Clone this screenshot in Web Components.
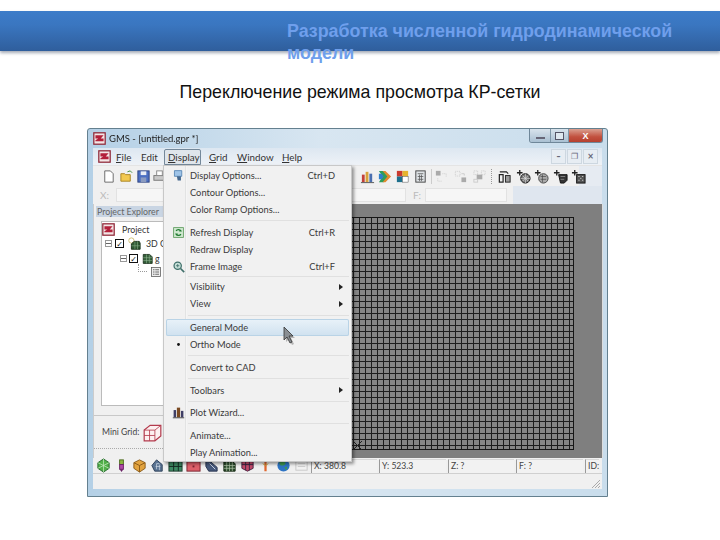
<!DOCTYPE html>
<html lang="ru">
<head>
<meta charset="utf-8">
<title>GMS</title>
<style>
  html, body { margin: 0; background: #fff; }
  body { width: 720px; height: 540px; overflow: hidden; font-family: 'Liberation Sans', sans-serif; }
</style>
</head>
<body>
<slide-header>Разработка численной гидродинамической модели</slide-header>
<slide-caption>Переключение режима просмотра КР-сетки</slide-caption>

<gms-window>
  <gms-titlebar slot="title">GMS - [untitled.gpr *]</gms-titlebar>
  <gms-menubar slot="menubar"></gms-menubar>
  <gms-toolbar slot="toolbar"></gms-toolbar>
  <gms-inputbar slot="inputbar"></gms-inputbar>
  <project-panel slot="side"></project-panel>
  <grid-view slot="view"></grid-view>
  <gms-statusbar slot="status"></gms-statusbar>
  <gms-dropdown slot="overlay">
    <menu-item icon="options" shortcut="Ctrl+D">Display Options...</menu-item>
    <menu-item>Contour Options...</menu-item>
    <menu-item>Color Ramp Options...</menu-item>
    <menu-sep></menu-sep>
    <menu-item icon="refresh" shortcut="Ctrl+R">Refresh Display</menu-item>
    <menu-item>Redraw Display</menu-item>
    <menu-item icon="frame" shortcut="Ctrl+F">Frame Image</menu-item>
    <menu-sep style="height:3.5px"></menu-sep>
    <menu-item arrow>Visibility</menu-item>
    <menu-item arrow>View</menu-item>
    <menu-sep style="height:6.5px"></menu-sep>
    <menu-item active>General Mode</menu-item>
    <menu-item icon="dot">Ortho Mode</menu-item>
    <menu-sep style="height:6px"></menu-sep>
    <menu-item>Convert to CAD</menu-item>
    <menu-sep style="height:6px"></menu-sep>
    <menu-item arrow>Toolbars</menu-item>
    <menu-sep></menu-sep>
    <menu-item icon="chart">Plot Wizard...</menu-item>
    <menu-sep></menu-sep>
    <menu-item>Animate...</menu-item>
    <menu-item>Play Animation...</menu-item>
  </gms-dropdown>
</gms-window>

<script>
// small toolbar and tree pictures, all drawn on a 16x16 box
const ICONS = {
  logo: '<rect x="1" y="1" width="14" height="14" fill="#f3e6e6" stroke="#8c2233" stroke-width="1.5"/><path d="M3 4h10L9.5 8H13v3.500H3V10l3.500-2H3z" fill="#b3203a"/>',
  new: '<path d="M4 2h6l3 3v9H4z" fill="#fff" stroke="#666"/>',
  open: '<path d="M2 13V5h4l1 1h5v7z" fill="#f2c94f" stroke="#a98322"/><path d="M9 3l3-1 2 2" fill="none" stroke="#3d8b3d"/>',
  save: '<rect x="2" y="2" width="12" height="12" fill="#4c6fc2" stroke="#2c417f"/><rect x="5" y="2.500" width="6" height="4" fill="#e8edf6"/><rect x="5" y="9" width="6" height="5" fill="#8b9bc0"/>',
  print: '<rect x="2" y="7" width="12" height="5" fill="#c9c9c9" stroke="#777"/><rect x="5" y="2" width="6" height="5" fill="#fff" stroke="#888"/>',
  bars: '<rect x="2" y="6" width="3" height="8" fill="#c2413a"/><rect x="6" y="3" width="3" height="11" fill="#d8a23a"/><rect x="10" y="5" width="3" height="9" fill="#4a6fb0"/><path d="M1 14.500h14" stroke="#555"/>',
  ramp: '<path d="M2 2h5l7 6-7 6H2l4-6z" fill="#2e9d5b"/><path d="M6 2h3l6 6-6 6H6l5-6z" fill="#e08a2e"/><path d="M2 5h3l2 3-2 3H2z" fill="#2f7fc9"/>',
  colors: '<rect x="2" y="2" width="6" height="6" fill="#c93a2e"/><rect x="8" y="2" width="6" height="6" fill="#e6b32e"/><rect x="2" y="8" width="6" height="6" fill="#1d6f8c"/><rect x="8" y="8" width="6" height="6" fill="#fff" stroke="#444" stroke-width=".5"/>',
  calc: '<rect x="3" y="2" width="10" height="12" fill="#dfe3e6" stroke="#444"/><path d="M5 5h6M5 8h6M5 11h6M7 6v7M9 6v7" stroke="#555" stroke-width=".8"/>',
  faint1: '<rect x="2" y="2" width="5" height="5" fill="#aaa"/><path d="M9 5h4v3M4 10v3h5" fill="none" stroke="#ccc" stroke-dasharray="1 1"/>',
  faint2: '<rect x="2.500" y="2.500" width="5" height="5" fill="none" stroke="#ccc" stroke-dasharray="1 1"/><rect x="9" y="9" width="5" height="5" fill="#aaa"/><path d="M9 5h3v2" fill="none" stroke="#ccc"/>',
  faint3: '<rect x="2" y="2" width="4" height="4" fill="none" stroke="#ccc" stroke-dasharray="1 1"/><rect x="10" y="2" width="4" height="4" fill="none" stroke="#ccc" stroke-dasharray="1 1"/><rect x="5" y="6" width="6" height="5" fill="#aaa"/><rect x="2" y="11" width="4" height="3" fill="none" stroke="#ccc"/>',
  solid: '<rect x="2.500" y="6" width="4" height="8" fill="none" stroke="#222" stroke-width="1.300"/><rect x="9" y="7" width="5" height="7" fill="#999" stroke="#222"/><path d="M3 3h7l2 2" fill="none" stroke="#222" stroke-width="1.200"/>',
  tool1: '<circle cx="10" cy="10" r="5" fill="#777" stroke="#111"/><path d="M7 7l6 6M13 7l-6 6M10 5v10M5 10h10" stroke="#ddd" stroke-width=".7"/><path d="M4 1v6M1 4h6" stroke="#222" stroke-width="1.400"/>',
  tool2: '<circle cx="10" cy="10" r="5" fill="#aaa" stroke="#444"/><path d="M7 8h6M7 11h6M9 6v8" stroke="#444" stroke-width=".7"/><path d="M4 1v6M1 4h6" stroke="#222" stroke-width="1.400"/>',
  tool3: '<path d="M6 6h9v6l-3 3H8z" fill="#333" stroke="#111"/><path d="M8 8h5M8 11h4" stroke="#aaa" stroke-width=".7"/><path d="M4 1v6M1 4h6" stroke="#222" stroke-width="1.400"/>',
  tool4: '<rect x="6" y="6" width="9" height="9" fill="#555" stroke="#111"/><path d="M8 8h1M12 8h1M8 12h1M12 12h1M10 10h1" stroke="#eee"/><path d="M4 1v6M1 4h6" stroke="#222" stroke-width="1.400"/>',
  cone: '<path d="M8 1l6 4v6l-6 4-6-4V5z" fill="#52b04a" stroke="#23662a"/><path d="M8 1v14M2 5l12 6M14 5L2 11" stroke="#c3e8bd" stroke-width=".8"/>',
  marker: '<rect x="6" y="2" width="4" height="5" fill="#8bb93f" stroke="#4d6b20"/><rect x="6" y="7" width="4" height="5" fill="#b14aa8" stroke="#6b2166"/><path d="M6 12l2 3 2-3z" fill="#6b2166"/>',
  box: '<path d="M8 2l6 3v6l-6 4-6-4V5z" fill="#e2a33f" stroke="#8a5a16"/><path d="M2 5l6 3 6-3M8 8v7" fill="none" stroke="#8a5a16"/>',
  house: '<path d="M7 2l6 5v7H5L2 8z" fill="#5a7392" stroke="#2c3e57"/><path d="M7 6h3M6 9h5M7 6v6M10 7v6" stroke="#c8d4e2" stroke-width=".8"/>',
  tgrid: '<rect x="1" y="4" width="14" height="10" fill="#3d8a63" stroke="#1f3f30"/><path d="M1 9h14M6 4v10M11 4v10" stroke="#12281f"/>',
  tred: '<rect x="1" y="4" width="14" height="10" fill="#dd5f69" stroke="#7a2430"/><rect x="7" y="8" width="2" height="2" fill="#7a2430"/>',
  slate: '<path d="M2 3l5 1 7 6v4H5L2 9z" fill="#46597c" stroke="#2a3550"/><path d="M6 6l6 6" stroke="#cfd8e6"/>',
  mesh: '<path d="M2 4h9l3 2v8H2z" fill="#2f5130" stroke="#12240f"/><path d="M2 8h12M2 11h12M5 4v10M8 4v10M11 4v10" stroke="#b7c9b0" stroke-width=".7"/>',
  mesh2: '<path d="M2 3h12v8l-6 3-6-3z" fill="#c14a6a" stroke="#4b2140"/><path d="M2 7h12M6 3v10M10 3v10" stroke="#2e2340" stroke-width=".9"/>',
  tee: '<path d="M3 3h10M8 3v11" stroke="#e0662e" stroke-width="2.400" fill="none"/><path d="M5 6l3 2 3-2" stroke="#c2a13a" fill="none"/>',
  globe: '<circle cx="8" cy="8" r="6.500" fill="#2e74c4"/><path d="M4 4c3-2 5-1 6 1s-2 3-4 3-3-2-2-4z" fill="#3f9a52"/><path d="M9 10l3-1-1 4z" fill="#3f9a52"/>',
  faint4: '<rect x="2" y="3" width="12" height="10" fill="#f2f2f2" stroke="#c8c8c8"/><path d="M4 6h8M4 9h8" stroke="#ccc"/>',
  cube3d: '<path d="M4 3h8l3 3v8H4z" fill="#355f3a" stroke="#162b18"/><path d="M4 7h11M4 10.500h11M8 3v11M11.500 3v11" stroke="#9fc2a0" stroke-width=".6"/>',
  ball: '<circle cx="5" cy="4" r="3" fill="none" stroke="#cdbb6a"/><path d="M8 5h6l1 2v7H5V8z" fill="#2f5a33" stroke="#142a15"/><path d="M5 10h10M9 5v9M12 5v9" stroke="#8fb78f" stroke-width=".6"/>',
  list: '<rect x="2" y="2" width="12" height="12" fill="#eee" stroke="#555"/><path d="M4 5h2M7 5h5M4 8h2M7 8h5M4 11h2M7 11h5" stroke="#444"/>',
  minigrid: '<path d="M6 2h9v9l-5 4H1V6z" fill="#fdf0f0" stroke="#b33a4c"/><path d="M1 6h9v9M10 6l5-4M1 10.500h9M5.500 6v9" fill="none" stroke="#b33a4c" stroke-width=".7"/>',
  options: '<path d="M3 2h9v7H3z" fill="#9fc4e8" stroke="#4d7fb0"/><path d="M6 9l5 0 0 5-4 0z" fill="#46698f"/>',
  refresh: '<rect x="2" y="2" width="12" height="12" fill="#cfe8cf" stroke="#5a9a5a"/><path d="M5 6c1-2 5-2 6 0l-2 0M11 10c-1 2-5 2-6 0l2 0" fill="none" stroke="#1f7a2f" stroke-width="1.400"/>',
  frame: '<circle cx="7" cy="7" r="4.500" fill="#c6dfd8" stroke="#3f6f6a" stroke-width="1.500"/><path d="M10.500 10.500L15 15" stroke="#3f6f6a" stroke-width="2"/><path d="M5 7h4M7 5v4" stroke="#3f6f6a"/>',
  dot: '<circle cx="8" cy="8" r="1.700" fill="#111"/>',
  chart: '<rect x="2" y="5" width="3" height="9" fill="#3f3f66"/><rect x="6" y="2" width="4" height="12" fill="#7a4a22"/><rect x="11" y="6" width="3" height="8" fill="#3f3f66"/><path d="M1 14.500h14" stroke="#333"/>',
};

class ToolIcon extends HTMLElement {
  connectedCallback() {
    const size = this.getAttribute('size') || 15;
    this.attachShadow({ mode: 'open' });
    this.shadowRoot.innerHTML = `
      <style>
        :host { display: block; width: ${size}px; height: ${size}px; flex: none; }
        svg { display: block; width: 100%; height: 100%; }
      </style>
      <svg viewBox="0 0 16 16">${ICONS[this.getAttribute('name')] || ''}</svg>
    `;
  }
}

class SlideHeader extends HTMLElement {
  constructor() {
    super();
    this.attachShadow({ mode: 'open' });
    this.shadowRoot.innerHTML = `
      <style>
        :host {
          display: block;
          margin-top: 11px;
          height: 40px;
          padding: 9px 0 0 287px;
          box-sizing: border-box;
          background: linear-gradient(#3c7cc9, #3a76c0 35%, #2f5e9c 100%);
          box-shadow: 0 2px 3px rgba(90, 100, 120, .55);
          color: #6f9fec;
          font: bold 17.85px/22px 'Liberation Sans', sans-serif;
        }
        .text { width: 400px; }
      </style>
      <div class="text"><slot></slot></div>
    `;
  }
}

class SlideCaption extends HTMLElement {
  constructor() {
    super();
    this.attachShadow({ mode: 'open' });
    this.shadowRoot.innerHTML = `
      <style>
        :host {
          display: block;
          margin-top: 31px;
          height: 46px;
          text-align: center;
          color: #111;
          font: 17.8px/20px 'Liberation Sans', sans-serif;
        }
      </style>
      <slot></slot>
    `;
  }
}

class GmsWindow extends HTMLElement {
  constructor() {
    super();
    this.attachShadow({ mode: 'open' });
    this.shadowRoot.innerHTML = `
      <style>
        :host {
          display: flex;
          flex-direction: column;
          position: relative;
          box-sizing: border-box;
          width: 521px;
          height: 369px;
          margin-left: 87px;
          padding: 0 5px 7px 5px;
          border: 1px solid #64808f;
          border-radius: 3px 3px 0 0;
          background: linear-gradient(90deg, #b4d0e6, #d8e6f1 45%, #c9ddec);
          color: #333;
          font: 9.3px Lato, 'Open Sans', sans-serif;
          filter: blur(.3px);
        }
        .inner { flex: 1; display: flex; flex-direction: column; min-height: 0; background: #f0f0f0; }
        .body { flex: 1; display: flex; min-height: 0; }
      </style>
      <slot name="title"></slot>
      <div class="inner">
        <slot name="menubar"></slot>
        <slot name="toolbar"></slot>
        <slot name="inputbar"></slot>
        <div class="body">
          <slot name="side"></slot>
          <slot name="view"></slot>
        </div>
        <slot name="status"></slot>
      </div>
      <slot name="overlay"></slot>
    `;
  }
}

class GmsTitlebar extends HTMLElement {
  constructor() {
    super();
    this.attachShadow({ mode: 'open' });
    this.shadowRoot.innerHTML = `
      <style>
        :host { display: flex; align-items: center; height: 19px; font-size: 9.5px; color: #222; position: relative; }
        tool-icon { margin-right: 3px; }
        .btns { display: flex; margin-left: auto; align-self: flex-start; margin-right: -1px; border: 1px solid #6f8799; border-top: 0; border-radius: 0 0 3px 3px; overflow: hidden; }
        .btn { width: 20px; height: 13px; background: linear-gradient(#d8e3ec, #aac0d2); border-right: 1px solid #8097a8; display: grid; place-items: center; }
        .btn.max { width: 17px; }
        .btn.close { width: 33px; border: 0; background: linear-gradient(#dba091, #c2513f 60%, #b5402f); color: #fff; font: bold 9px 'Liberation Sans', sans-serif; }
        .min { width: 9px; height: 2px; margin-top: 5px; background: #667; }
        .sq { width: 7px; height: 6px; border: 1px solid #556; background: #dfe8ef; }
      </style>
      <tool-icon name="logo" size="13"></tool-icon>
      <slot></slot>
      <div class="btns">
        <div class="btn"><div class="min"></div></div>
        <div class="btn max"><div class="sq"></div></div>
        <div class="btn close">X</div>
      </div>
    `;
  }
}

class GmsMenubar extends HTMLElement {
  constructor() {
    super();
    this.attachShadow({ mode: 'open' });
    this.shadowRoot.innerHTML = `
      <style>
        :host {
          display: flex;
          align-items: center;
          height: 18px;
          padding-left: 5px;
          background: linear-gradient(#dde7f1, #eef2f7);
          border-bottom: 1px solid #e4e4e4;
          box-sizing: border-box;
          font-size: 9.8px;
          color: #333;
        }
        .items { display: flex; margin-left: 1px; }
        .m { padding: 1px 3px; border: 1px solid transparent; box-sizing: border-box; white-space: nowrap; }
        .m.open { border: 1px solid #74889a; background: #dfe5eb; border-radius: 2px 2px 0 0; margin-right: 4px; }
        u { text-decoration-thickness: 1px; }
        .mdi { display: flex; gap: 1px; margin-left: auto; margin-right: 4px; color: #667; }
        .b { width: 13px; height: 13px; background: #e7edf3; border: 1px solid #cdd7e0; display: grid; place-items: center; font: bold 8px 'DejaVu Sans', sans-serif; }
      </style>
      <tool-icon name="logo" size="13"></tool-icon>
      <div class="items">
        <span class="m" style="width:25px"><u>F</u>ile</span>
        <span class="m" style="width:27px">Edit</span>
        <span class="m open" style="width:37px"><u>D</u>isplay</span>
        <span class="m" style="width:28px"><u>G</u>rid</span>
        <span class="m" style="width:45px"><u>W</u>indow</span>
        <span class="m"><u>H</u>elp</span>
      </div>
      <div class="mdi">
        <span class="b">–</span><span class="b">❐</span><span class="b">×</span>
      </div>
    `;
  }
}

class GmsToolbar extends HTMLElement {
  constructor() {
    super();
    this.attachShadow({ mode: 'open' });
    const slot = (n, w = 18) => `<span class="s" style="width:${w}px"><tool-icon name="${n}"></tool-icon></span>`;
    this.shadowRoot.innerHTML = `
      <style>
        :host {
          display: flex;
          align-items: center;
          height: 20px;
          padding: 0 15px 0 6px;
          background: linear-gradient(90deg, #f0f0f0 95.500%, #e6ebf2 95.500%);
        }
        .s { display: grid; place-items: center; height: 20px; flex: none; }
        .sp { flex: 1; }
        .sep { width: 1px; height: 15px; margin: 0 0 0 1px; background: #ccc; flex: none; }
        .dots { width: 0; height: 15px; margin: 0 2px; border-left: 1px dotted #999; flex: none; }
      </style>
      ${slot('new')}${slot('open')}${slot('save', 17)}${slot('print', 15)}
      <div class="sp"></div>
      ${slot('bars', 17)}${slot('ramp', 17)}${slot('colors', 18)}${slot('calc', 19)}
      <div class="sep"></div>
      ${slot('faint1', 19)}${slot('faint2', 19)}${slot('faint3', 19)}
      <div class="dots"></div>
      ${slot('solid', 20)}${slot('tool1')}${slot('tool2')}${slot('tool3', 20)}${slot('tool4', 17)}
    `;
  }
}

class GmsInputbar extends HTMLElement {
  constructor() {
    super();
    this.attachShadow({ mode: 'open' });
    this.shadowRoot.innerHTML = `
      <style>
        :host {
          display: flex;
          align-items: center;
          height: 18px;
          padding-left: 7px;
          background: linear-gradient(90deg, #f0f0f0 82.500%, #dfe6ef 82.500%);
          color: #bbb;
          font-size: 10px;
        }
        .x { width: 16px; }
        .box { height: 14px; box-sizing: border-box; background: #f6f6f6; border: 1px solid #e2e2e2; }
        .a { width: 290px; margin-right: 7px; }
        .f { width: 12px; }
        .b { width: 82px; }
      </style>
      <span class="x">X:</span><div class="box a"></div><span class="f">F:</span><div class="box b"></div>
    `;
  }
}

class ProjectPanel extends HTMLElement {
  constructor() {
    super();
    this.attachShadow({ mode: 'open' });
    this.shadowRoot.innerHTML = `
      <style>
        :host {
          display: flex;
          flex-direction: column;
          width: 70px;
          flex: none;
          padding-bottom: 9px;
          box-sizing: border-box;
          background: #f0f0f0;
          border-left: 1px solid #ccc;
          color: #444;
        }
        .head { height: 11px; margin: 2px 0 4px 2px; padding-left: 1px; background: #c9d5e3; color: #666; font-size: 8.8px; line-height: 11px; white-space: nowrap; }
        .tree { flex: 1; margin-left: 7px; padding: 0; background: #fff; border: 1px solid #bbb; border-width: 1px 0 1px 1px; font-size: 8.8px; color: #333; }
        .row { display: flex; align-items: center; gap: 3px; height: 14px; white-space: nowrap; }
        .minus { width: 7px; height: 7px; box-sizing: border-box; border: 1px solid #999; flex: none; background: linear-gradient(#666, #666) center / 5px 1px no-repeat #fff; }
        .check { width: 9px; height: 9px; box-sizing: border-box; border: 1.500px solid #111; flex: none; display: grid; place-items: center; font: bold 8px 'DejaVu Sans', sans-serif; color: #111; background: #fff; }
        .dash { width: 9px; height: 8px; margin-top: -8px; box-sizing: border-box; border: 1px dotted #999; border-width: 0 0 1px 1px; flex: none; }
        .mini { height: 34px; display: flex; align-items: center; gap: 4px; padding-left: 8px; border-top: 1px solid #c8c8c8; border-bottom: 1px dotted #aaa; margin-top: 9px; box-sizing: border-box; font-size: 8.6px; white-space: nowrap; }
      </style>
      <div class="head">Project Explorer</div>
      <div class="tree">
        <div class="row"><tool-icon name="logo" size="13"></tool-icon><span style="margin-left:4px">Project</span></div>
        <div class="row" style="padding-left:3px;height:15px"><i class="minus"></i><i class="check">✓</i><tool-icon name="ball" size="14"></tool-icon><span style="margin-left:2px">3D G</span></div>
        <div class="row" style="padding-left:18px;height:14px;gap:2px"><i class="minus"></i><i class="check">✓</i><tool-icon name="cube3d" size="13"></tool-icon><span>g</span></div>
        <div class="row" style="padding-left:36px;height:13px"><i class="dash"></i><tool-icon name="list" size="12"></tool-icon></div>
      </div>
      <div class="mini"><span>Mini Grid:</span><tool-icon name="minigrid" size="19"></tool-icon></div>
    `;
  }
}

class GridView extends HTMLElement {
  constructor() {
    super();
    this.attachShadow({ mode: 'open' });
    this.shadowRoot.innerHTML = `
      <style>
        :host {
          flex: 1;
          display: flex;
          justify-content: flex-end;
          align-items: flex-start;
          padding: 13px 28px 0 0;
          margin-right: -1px;
          background: #7f7f7f;
          box-sizing: border-box;
          border-right: 1px solid #ddd;
        }
        .mesh {
          position: relative;
          width: 232px;
          height: 233px;
          box-sizing: border-box;
          border: 1px solid #161616;
          border-width: 1px 1px 1px 0;
          background:
            repeating-linear-gradient(90deg, transparent 0 5px, #1e1e1e 5px 6px),
            repeating-linear-gradient(180deg, transparent 0 5px, #1e1e1e 5px 6px),
            #868686;
        }
        svg { position: absolute; left: 11px; bottom: -1px; width: 9px; height: 9px; }
      </style>
      <div class="mesh"><svg viewBox="0 0 9 9"><path d="M0 0l9 9M9 0L0 9" stroke="#222"/></svg></div>
    `;
  }
}

class GmsStatusbar extends HTMLElement {
  constructor() {
    super();
    this.attachShadow({ mode: 'open' });
    const names = ['cone', 'marker', 'box', 'house', 'tgrid', 'tred', 'slate', 'mesh', 'mesh2', 'tee', 'globe', 'faint4'];
    this.shadowRoot.innerHTML = `
      <style>
        :host { display: block; height: 31px; background: #f0f0f0; }
        .row { display: flex; align-items: center; height: 15px; padding-left: 1px; border-bottom: 1px solid #d0d0d0; }
        .i { width: 18px; display: grid; place-items: center; flex: none; }
        .icons { display: flex; width: 215px; flex: none; }
        .f { height: 14px; box-sizing: border-box; margin-left: 2px; padding-left: 2px; border-left: 1px solid #999; border-top: 1px solid #d8d8d8; background: #f2f2f2; line-height: 13px; white-space: nowrap; font-size: 8.6px; color: #444; flex: none; }
        .foot { height: 15px; position: relative; }
        svg { position: absolute; right: 1px; bottom: 0; width: 11px; height: 11px; }
      </style>
      <div class="row">
        <div class="icons">${names.map(n => `<span class="i"><tool-icon name="${n}"></tool-icon></span>`).join('')}</div>
        <div class="f" style="width:66px">X: 380.8</div>
        <div class="f" style="width:67px">Y: 523.3</div>
        <div class="f" style="width:66px">Z: ?</div>
        <div class="f" style="width:67px">F: ?</div>
        <div class="f" style="width:14px">ID:</div>
      </div>
      <div class="foot"><svg viewBox="0 0 11 11"><path d="M10 2L2 10M10 5L5 10M10 8l-2 2" stroke="#aaa"/></svg></div>
    `;
  }
}

class GmsDropdown extends HTMLElement {
  constructor() {
    super();
    this.attachShadow({ mode: 'open' });
    this.shadowRoot.innerHTML = `
      <style>
        :host {
          position: absolute;
          left: 75px;
          top: 36px;
          width: 189px;
          height: 297px;
          box-sizing: border-box;
          padding: 1px 2px 0;
          background: linear-gradient(90deg, #f1f1f1 21px, #e2e3e3 21px 22px, #f5f5f5 22px, #f5f5f5 23px, #f1f1f1 23px);
          border: 1px solid #c8c8c8;
          box-shadow: 2px 2px 3px rgba(0, 0, 0, .4);
          display: block;
          font-size: 9.3px;
        }
        .cursor { position: absolute; left: 119px; top: 160px; width: 13px; height: 19px; }
      </style>
      <slot></slot>
      <svg class="cursor" viewBox="0 0 13 19">
        <path d="M3 3l0 13 3-3 3 6 2-1-3-6h4z" fill="#000" opacity=".25"/>
        <path d="M1 1l0 13 3-3 3 6 2-1-3-6h4z" fill="#8a8f94" stroke="#333" stroke-width=".8"/>
      </svg>
    `;
  }
}

class MenuItem extends HTMLElement {
  constructor() {
    super();
    this.attachShadow({ mode: 'open' });
  }

  connectedCallback() {
    const icon = this.getAttribute('icon');
    const shortcut = this.getAttribute('shortcut');
    this.shadowRoot.innerHTML = `
      <style>
        :host { display: flex; align-items: center; height: 17px; color: #3a3a3a; white-space: nowrap; box-sizing: border-box; }
        :host([active]) { background: linear-gradient(#e9f2f9, #cfe1ef); box-shadow: inset 0 0 0 1px #b9d3e6; border-radius: 2px; }
        .ic { width: 24px; display: grid; place-items: center; flex: none; }
        .key { margin-left: auto; margin-right: 14px; }
        .arrow { margin-left: auto; margin-right: 6px; width: 0; height: 0; border-left: 4px solid #222; border-top: 3px solid transparent; border-bottom: 3px solid transparent; }
      </style>
      <span class="ic">${icon ? `<tool-icon name="${icon}" size="13"></tool-icon>` : ''}</span>
      <slot></slot>
      ${shortcut ? `<span class="key">${shortcut}</span>` : ''}
      ${this.hasAttribute('arrow') ? '<span class="arrow"></span>' : ''}
    `;
  }
}

class MenuSep extends HTMLElement {
  constructor() {
    super();
    this.attachShadow({ mode: 'open' });
    this.shadowRoot.innerHTML = `
      <style>
        :host { display: flex; align-items: center; height: 5.5px; padding-left: 22px; }
        div { flex: 1; height: 1px; background: #e0e0e0; }
      </style>
      <div></div>
    `;
  }
}

customElements.define('tool-icon', ToolIcon);
customElements.define('slide-header', SlideHeader);
customElements.define('slide-caption', SlideCaption);
customElements.define('gms-window', GmsWindow);
customElements.define('gms-titlebar', GmsTitlebar);
customElements.define('gms-menubar', GmsMenubar);
customElements.define('gms-toolbar', GmsToolbar);
customElements.define('gms-inputbar', GmsInputbar);
customElements.define('project-panel', ProjectPanel);
customElements.define('grid-view', GridView);
customElements.define('gms-statusbar', GmsStatusbar);
customElements.define('gms-dropdown', GmsDropdown);
customElements.define('menu-item', MenuItem);
customElements.define('menu-sep', MenuSep);
</script>
</body>
</html>
